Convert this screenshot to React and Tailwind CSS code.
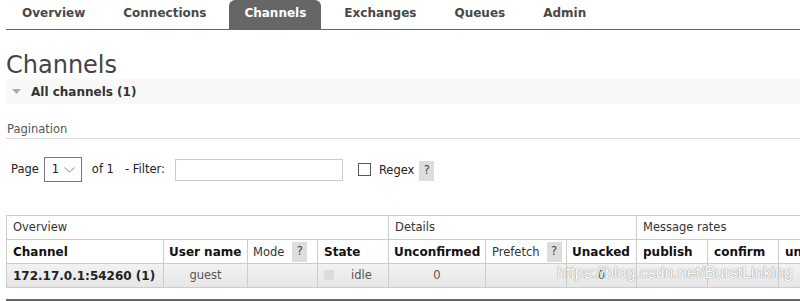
import React from "react";

const tabs = ["Overview", "Connections", "Channels", "Exchanges", "Queues", "Admin"];

const Help = ({ className = "" }) => (
  <span
    className={`inline-flex items-center justify-center bg-[#dddddd] text-[#444] font-normal w-[15px] h-[20px] text-[11.5px] ${className}`}
  >
    ?
  </span>
);

const colWidths = [157, 84, 70, 71, 97, 81, 70, 71, 71, 130, 110, 60];

export default function App() {
  return (
    <div
      className="relative w-[800px] h-[301px] overflow-hidden bg-white text-[#444]"
      style={{ fontFamily: '"DejaVu Sans", Verdana, sans-serif' }}
    >
      {/* top nav */}
      <div className="flex h-[30px] ml-[6px] pl-[1px] border-b border-[#666]">
        {tabs.map((t) => (
          <div
            key={t}
            className={`h-[29px] px-[15px] mr-[8px] pt-[6px] text-[12px] leading-[14px] font-bold ${
              t === "Channels" ? "bg-[#666] text-white rounded-t-[6px]" : "text-[#484848]"
            }`}
          >
            {t}
          </div>
        ))}
      </div>

      <div className="pl-[6px]">
        <h1 className="pt-[22px] text-[24px] leading-[27px] font-normal text-[#444]">Channels</h1>

        <div className="h-[25px] bg-[#f8f8f8] flex items-center text-[12px] font-bold text-[#333]">
          <svg width="9" height="6" viewBox="0 0 9 6" className="ml-[6px] mr-[10px]">
            <polygon points="0,0 9,0 4.5,5" fill="#aaa" />
          </svg>
          All channels (1)
        </div>

        <div className="mt-[18px] pl-[1px] pb-[2px] border-b border-[#ddd] text-[11.5px] leading-[14px] text-[#555]">
          Pagination
        </div>

        <div className="mt-[18px] h-[25px] flex items-center text-[11.5px] text-[#222]">
          <span className="ml-[5px]">Page</span>
          <div className="ml-[5px] w-[38px] h-[25px] border border-[#777] flex items-center pl-[7px]">
            <span>1</span>
            <svg width="11" height="6" viewBox="0 0 11 6" className="ml-[5px]">
              <polyline points="0.5,0.5 5.5,5 10.5,0.5" fill="none" stroke="#888" strokeWidth="1" />
            </svg>
          </div>
          <span className="ml-[10px]">of 1</span>
          <span className="ml-[11px]">- Filter:</span>
          <div className="ml-[10px] w-[168px] h-[22px] border border-[#ccc]" />
          <div className="ml-[15px] w-[13px] h-[13px] border border-[#555] bg-white" />
          <span className="ml-[8px] mt-[3px]">Regex</span>
          <Help className="ml-[5px] w-[14px] h-[19px] mt-[2px]" />
        </div>

        <div className="mt-[33px] overflow-hidden">
          <table className="border-collapse table-fixed w-[1072px] text-[11.5px] whitespace-nowrap">
            <colgroup>
              {colWidths.map((w, i) => (
                <col key={i} style={{ width: w }} />
              ))}
            </colgroup>
            <thead>
              <tr className="h-[24px] text-[#333]">
                <th colSpan={4} className="border border-[#ccc] text-left font-normal pl-[6px] py-0">
                  Overview
                </th>
                <th colSpan={3} className="border border-[#ccc] text-left font-normal pl-[6px] py-0">
                  Details
                </th>
                <th colSpan={5} className="border border-[#ccc] text-left font-normal pl-[6px] py-0">
                  Message rates
                </th>
              </tr>
              <tr className="h-[24px] text-[12px] text-[#111]">
                <th className="border border-[#ccc] text-left pl-[6px] font-bold">Channel</th>
                <th className="border border-[#ccc] text-left pl-[5px] font-bold">User name</th>
                <th className="border border-[#ccc] text-left pl-[5px] font-normal text-[11.5px] text-[#333]">
                  Mode
                  <Help className="ml-[8px] align-middle" />
                </th>
                <th className="border border-[#ccc] text-left pl-[6px] font-bold">State</th>
                <th className="border border-[#ccc] text-left pl-[5px] font-bold">Unconfirmed</th>
                <th className="border border-[#ccc] text-left pl-[6px] font-normal text-[11.5px] text-[#333]">
                  Prefetch
                  <Help className="ml-[7px] align-middle" />
                </th>
                <th className="border border-[#ccc] text-left pl-[5px] font-bold">Unacked</th>
                <th className="border border-[#ccc] text-left pl-[6px] font-bold">publish</th>
                <th className="border border-[#ccc] text-left pl-[6px] font-bold">confirm</th>
                <th className="border border-[#ccc] text-left pl-[6px] font-bold">unroutable (drop)</th>
                <th className="border border-[#ccc] text-left pl-[6px] font-bold">deliver / get</th>
                <th className="border border-[#ccc] text-left pl-[6px] font-bold">ack</th>
              </tr>
            </thead>
            <tbody>
              <tr className="h-[24px] bg-gradient-to-b from-[#f2f2f2] to-[#e6e6e6] text-[#555]">
                <td className="border border-[#ccc] pl-[6px] text-[12px] font-bold text-[#222]">
                  172.17.0.1:54260 (1)
                </td>
                <td className="border border-[#ccc] text-center">guest</td>
                <td className="border border-[#ccc]"></td>
                <td className="border border-[#ccc] pl-[6px]">
                  <span className="inline-block w-[10px] h-[10px] bg-[#dcdcdc] mr-[17px] align-middle" />
                  idle
                </td>
                <td className="border border-[#ccc] text-center">0</td>
                <td className="border border-[#ccc]"></td>
                <td className="border border-[#ccc] text-center">0</td>
                <td className="border border-[#ccc]"></td>
                <td className="border border-[#ccc]"></td>
                <td className="border border-[#ccc]"></td>
                <td className="border border-[#ccc]"></td>
                <td className="border border-[#ccc]"></td>
              </tr>
            </tbody>
          </table>
        </div>

        <div className="mt-[11px] h-[2px] bg-[#666]" />
      </div>

      <div
        className="absolute left-[557px] top-[264px] text-[16px] leading-[18px] text-white"
        style={{
          fontFamily: '"Liberation Sans", Arial, sans-serif',
          textShadow: "0 0 1px #888, 0 0 1px #999",
        }}
      >
        https://blog.csdn.net/BurstLinking
      </div>
    </div>
  );
}
